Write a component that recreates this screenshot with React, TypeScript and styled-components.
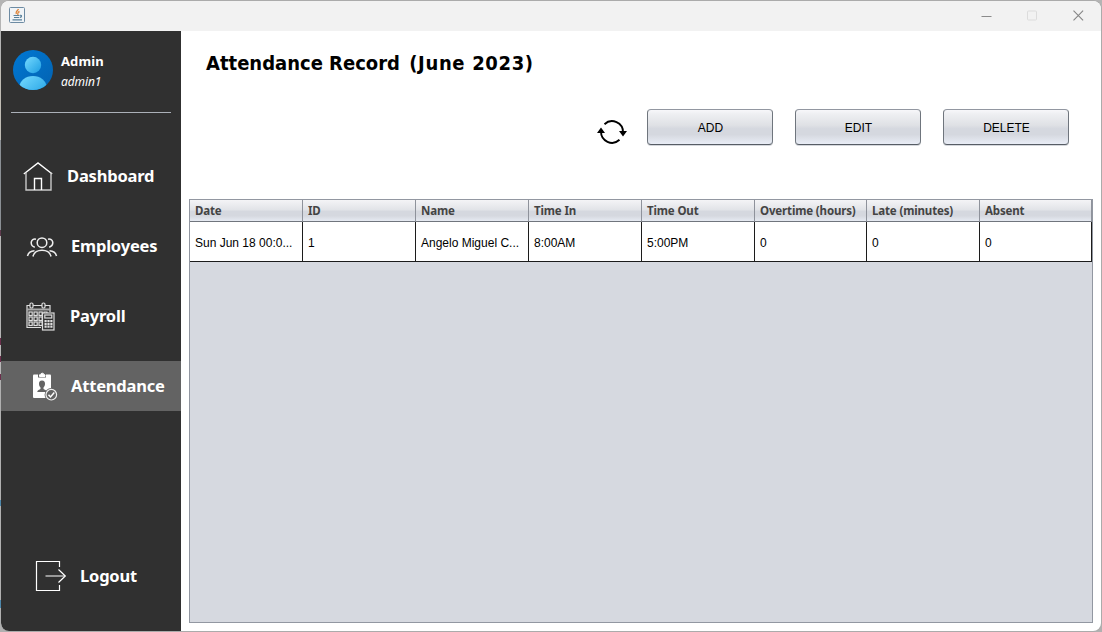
import React from "react";
import styled, { createGlobalStyle } from "styled-components";

const GlobalStyle = createGlobalStyle`
  * { box-sizing: border-box; }
  body { margin: 0; overflow: hidden; }
`;

const titleFont = `"DejaVu Sans Condensed", "DejaVu Sans", sans-serif`;
const labelFont = `"Noto Sans", "Open Sans", sans-serif`;

const Desktop = styled.div`
  width: 1102px;
  height: 632px;
  padding: 1px 1px 1px 1px;
  background: linear-gradient(#b4b4b4 0 60px, #c0bcb4 60px 140px, #8a8f94 140px 230px, #5f3a4e 230px 236px, #b4b4b4 236px 338px,
    #6b2e4c 338px 345px, #b8b8b8 345px 356px, #6b2e4c 356px 362px, #b8b8b8 362px 374px, #6b2e4c 374px 380px,
    #b0b0b0 380px 500px, #4d88ac 500px 506px, #b0b0b0 506px 600px, #4d88ac 600px 608px, #b0b0b0 608px);
`;

const Window = styled.div`
  width: 1100px;
  height: 630px;
  border-radius: 8px;
  overflow: hidden;
  background: #fff;
  display: flex;
  flex-direction: column;
  box-shadow: 0 0 0 1px #ababab;
  clip-path: inset(-1px -1px -1px 0 round 8px);
`;

const TitleBar = styled.header`
  height: 30px;
  flex: none;
  background: #f2f2f2;
  display: flex;
  justify-content: space-between;
`;

const AppIcon = styled.svg`
  width: 16px;
  height: 16px;
  margin: 6px 0 0 8px;
`;

const WindowControls = styled.div`
  display: flex;
  gap: 35px;
  padding: 9px 17px 0 0;
  svg { width: 11px; height: 11px; display: block; }
`;

const Body = styled.div`
  flex: 1;
  display: flex;
  min-height: 0;
`;

const Sidebar = styled.aside`
  width: 180px;
  flex: none;
  background: #303030;
  color: #fff;
  font-family: ${labelFont};
  display: flex;
  flex-direction: column;
`;

const Profile = styled.div`
  height: 82px;
  margin: 0 10px;
  border-bottom: 1px solid #abb0b8;
  display: flex;
  padding: 19px 0 0 2px;
`;

const Avatar = styled.svg`
  width: 40px;
  height: 40px;
  flex: none;
`;

const ProfileText = styled.div`
  padding: 3px 0 0 8px;
  font-size: 13px;
  line-height: 17px;
`;

const UserName = styled.div`
  font-weight: bold;
  letter-spacing: 0.1px;
`;

const UserId = styled.div`
  font-style: italic;
  font-size: 12px;
  line-height: 23px;
  letter-spacing: -0.1px;
`;

const Nav = styled.nav`
  display: flex;
  flex-direction: column;
  gap: 20px;
  padding-top: 38px;
  flex: 1;
`;

const NavItem = styled.a<{ $active?: boolean; $indent: number; $gap: number; $last?: boolean }>`
  height: 50px;
  flex: none;
  display: flex;
  align-items: center;
  gap: ${(p) => p.$gap}px;
  padding-left: ${(p) => p.$indent}px;
  background: ${(p) => (p.$active ? "#636363" : "transparent")};
  margin-top: ${(p) => (p.$last ? "auto" : "0")};
  margin-bottom: ${(p) => (p.$last ? "30px" : "0")};
  white-space: nowrap;
  svg { width: 32px; height: 32px; flex: none; }
`;

const NavLabel = styled.span`
  font-size: 16.5px;
  font-weight: bold;
  line-height: 20px;
  letter-spacing: -0.2px;
`;

const Main = styled.main`
  flex: 1;
  min-width: 0;
  padding: 18px 8px 8px;
  display: flex;
  flex-direction: column;
`;

const Heading = styled.h1`
  margin: 0 0 0 17px;
  font: bold 20px/28px ${titleFont};
  color: #000;
  white-space: nowrap;
`;

const Period = styled.span`
  margin-left: 3px;
  letter-spacing: 0.65px;
`;

const Toolbar = styled.div`
  height: 90px;
  flex: none;
  margin-top: 32px;
  padding-right: 24px;
  display: flex;
  justify-content: flex-end;
  gap: 22px;
`;

const RefreshIcon = styled.svg`
  width: 30px;
  height: 26px;
  margin: 10px -2px 0 0;
`;

const Button = styled.button`
  width: 126px;
  height: 36px;
  border: 1px solid #6f757d;
  border-top-color: #9297a1;
  border-bottom-color: #575d65;
  border-radius: 4px;
  padding: 2px 0 0 1px;
  background: linear-gradient(#f7f7fa 0, #eeeff2 12%, #dfe1e5 45%, #d5d8df 55%, #d5d8df 72%, #e9edf6 100%);
  box-shadow: 0 1px 0 #d4d7dc;
  font: 12px "Liberation Sans", Arial, sans-serif;
  color: #000;
`;

const TablePane = styled.div`
  flex: 1;
  border: 1px solid #9297a1;
  background: #d6d9e0;
`;

const Table = styled.div`
  display: grid;
  grid-template-columns: repeat(5, 113px) 112px 113px 112px;
`;

const HeadCell = styled.div`
  height: 22px;
  border-right: 1px solid #8e929b;
  border-bottom: 1px solid #70757d;
  background: linear-gradient(#f4f4f6 0, #e2e4e8 45%, #d5d8df 55%, #d5d8df 75%, #e6eaf2 100%);
  padding-left: 5px;
  font: bold 11.5px/22px ${labelFont};
  letter-spacing: -0.15px;
  color: #444;
  white-space: nowrap;
`;

const Cell = styled.div`
  height: 40px;
  border-right: 1px solid #1c1c1c;
  border-bottom: 1px solid #1c1c1c;
  background: #fff;
  padding-left: 5px;
  font: 12px/43px "Liberation Sans", Arial, sans-serif;
  color: #000;
  white-space: nowrap;
`;

const columns = ["Date", "ID", "Name", "Time In", "Time Out", "Overtime (hours)", "Late (minutes)", "Absent"];
const record = ["Sun Jun 18 00:0...", "1", "Angelo Miguel C...", "8:00AM", "5:00PM", "0", "0", "0"];

const HomeIcon = () => (
  <svg viewBox="0 0 32 32" fill="none" stroke="#fff" strokeWidth="1.4">
    <path d="M1.8 14 16 3l14.2 11" />
    <path d="M4 12.5V30h25V12.5" stroke="#c9c9c9" />
    <path d="M12.5 30V18.5h7V30" />
  </svg>
);

const PeopleIcon = () => (
  <svg viewBox="0 0 32 32" fill="none" stroke="#eee" strokeWidth="1.5">
    <circle cx="16" cy="12.7" r="4.8" />
    <path d="M7 26.5c1.5-8.5 16.5-8.5 18 0" />
    <path d="M10 9.2c-5.3-1.2-6.8 6-1.2 8M22 9.2c5.3-1.2 6.8 6 1.2 8M1.5 26c.8-3 3.500-5 7-5.200M30.500 26c-.8-3-3.500-5-7-5.200" />
  </svg>
);

const PayrollIcon = () => (
  <svg viewBox="0 0 32 32" fill="none" stroke="#ddd" strokeWidth="1.2">
    <path d="M17 27.5H3V5.5h3M9 5.5h9M21 5.5h5V12" />
    <path d="M3 9.5h23" strokeWidth="2" stroke="#aaa" />
    <rect x="6" y="3" width="3" height="5" rx="1.3" />
    <rect x="18" y="3" width="3" height="5" rx="1.3" />
    {[12.5, 17.5, 22.5].map((y) =>
      [5, 10, 15].map((x) => <rect key={`${x}-${y}`} x={x} y={y - 0.5} width="3.2" height="3.5" />)
    )}
    <path d="M20 15v-3h3v3" />
    <rect x="18.5" y="13" width="11.5" height="17" fill="#303030" />
    <rect x="20.8" y="15" width="7" height="3" />
    {[21, 23.8, 26.6].map((y) => (
      <path key={y} d={`M20.500 ${y}h8`} strokeWidth="2.2" strokeDasharray="2.2 .7" />
    ))}
  </svg>
);

const AttendanceIcon = () => (
  <svg viewBox="0 0 32 32">
    <rect x="5" y="4.5" width="18" height="23.5" rx="1" fill="#fff" />
    <rect x="10" y="3" width="8" height="4.5" fill="#636363" />
    <path d="M11.5 6.5V4.8h1.2a1.6 1.6 0 0 1 3.2 0H17v1.7z" fill="#fff" stroke="#fff" />
    <path d="M14 10.5c-2.3 0-3 1.5-3 3.2 0 1.7.7 3 1.5 3.7v1.5c-1 .8-3 .8-3.3 3h9.600c-.3-2.200-2.300-2.200-3.300-3v-1.500c.8-.7 1.500-2 1.500-3.700 0-1.700-.7-3.200-3-3.200z" fill="#636363" />
    <circle cx="23.3" cy="24.7" r="6.7" fill="#636363" />
    <circle cx="23.3" cy="24.7" r="5.3" fill="none" stroke="#eee" strokeWidth="1.2" />
    <path d="m20.500 24.700 2 2.200 3.800-4.400" fill="none" stroke="#fff" strokeWidth="1.5" />
  </svg>
);

const LogoutIcon = () => (
  <svg viewBox="0 0 32 32" fill="none" stroke="#fff" strokeWidth="1.2">
    <path d="M24.5 7V1.5h-23v29h23V25" />
    <path d="M10.5 16H30" stroke="#bbb" strokeWidth="1.5" />
    <path d="m23.5 9.5 6.800 6.500-6.800 6.500" />
  </svg>
);

export default function App() {
  return (
    <Desktop>
      <GlobalStyle />
      <Window>
        <TitleBar>
          <AppIcon viewBox="0 0 16 16" fill="none">
            <rect x=".5" y=".5" width="15" height="15" rx="1" fill="#f0f4f7" stroke="#6d8ba3" />
            <path d="M9.500 2c-1 2-3.500 2.500-2.200 5M10.500 4.500C8.500 5.500 8.500 6 9 8" stroke="#df8438" strokeWidth="1.4" />
            <path d="M4.500 8.500h6M5 10.500h5M11 8.300c2.500-.3 1.500 2-.3 2.200M3.500 12.800h9.500" stroke="#58809b" strokeWidth="1.2" />
          </AppIcon>
          <WindowControls>
            <svg viewBox="0 0 11 11"><path d="M.5 6.500h10" stroke="#8b8b8b" /></svg>
            <svg viewBox="0 0 11 11"><rect x=".5" y="1" width="9" height="9" rx="1" fill="none" stroke="#dcdcdc" /></svg>
            <svg viewBox="0 0 11 11"><path d="m.5.700 9.600 9.600m0-9.600L.5 10.300" stroke="#858585" strokeWidth="1.1" /></svg>
          </WindowControls>
        </TitleBar>
        <Body>
          <Sidebar>
            <Profile>
              <Avatar viewBox="0 0 40 40">
                <defs>
                  <linearGradient id="disc" x1="0" y1="0" x2="1" y2="1">
                    <stop offset="0" stopColor="#0078d4" />
                    <stop offset="1" stopColor="#0362b0" />
                  </linearGradient>
                  <linearGradient id="figure" x1="0" y1="0" x2="1" y2="1">
                    <stop offset="0" stopColor="#76daff" />
                    <stop offset="1" stopColor="#1c9de2" />
                  </linearGradient>
                  <clipPath id="round"><circle cx="20" cy="20" r="20" /></clipPath>
                </defs>
                <g clipPath="url(#round)">
                  <rect width="40" height="40" fill="url(#disc)" />
                  <circle cx="20" cy="15" r="8.2" fill="url(#figure)" />
                  <ellipse cx="20" cy="37" rx="13.5" ry="11" fill="url(#figure)" />
                </g>
              </Avatar>
              <ProfileText>
                <UserName>Admin</UserName>
                <UserId>admin1</UserId>
              </ProfileText>
            </Profile>
            <Nav>
              <NavItem $indent={21} $gap={13}><HomeIcon /><NavLabel>Dashboard</NavLabel></NavItem>
              <NavItem $indent={25} $gap={13}><PeopleIcon /><NavLabel>Employees</NavLabel></NavItem>
              <NavItem $indent={23} $gap={14}><PayrollIcon /><NavLabel>Payroll</NavLabel></NavItem>
              <NavItem $indent={27} $gap={11} $active><AttendanceIcon /><NavLabel>Attendance</NavLabel></NavItem>
              <NavItem $indent={34} $gap={13} $last><LogoutIcon /><NavLabel>Logout</NavLabel></NavItem>
            </Nav>
          </Sidebar>
          <Main>
            <Heading>Attendance Record <Period>(June 2023)</Period></Heading>
            <Toolbar>
              <RefreshIcon viewBox="0 0 30 26" fill="none" stroke="#000" strokeWidth="1.9">
                <path d="M7.500 5.200A11 11 0 0 1 26 13.500M22.500 20.800A11 11 0 0 1 4 12.500" />
                <path d="M22 12h8l-4 5.500zM0 14h8L4 8.500z" fill="#000" stroke="none" />
              </RefreshIcon>
              <Button>ADD</Button>
              <Button>EDIT</Button>
              <Button>DELETE</Button>
            </Toolbar>
            <TablePane>
              <Table>
                {columns.map((c) => <HeadCell key={c}>{c}</HeadCell>)}
                {record.map((v, i) => <Cell key={columns[i]}>{v}</Cell>)}
              </Table>
            </TablePane>
          </Main>
        </Body>
      </Window>
    </Desktop>
  );
}
